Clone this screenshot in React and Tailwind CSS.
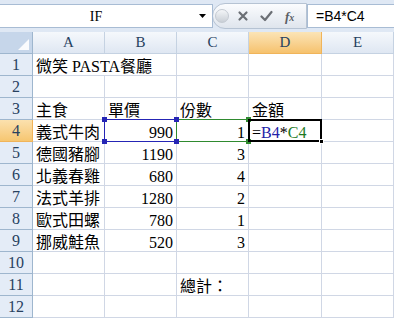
import React from 'react';

const cols = ['A', 'B', 'C', 'D', 'E'];

const rows = [
  ['微笑 PASTA餐廳', '', '', '', ''],
  ['', '', '', '', ''],
  ['主食', '單價', '份數', '金額', ''],
  ['義式牛肉', 990, 1, 'F', ''],
  ['德國豬腳', 1190, 3, '', ''],
  ['北義春雞', 680, 4, '', ''],
  ['法式羊排', 1280, 2, '', ''],
  ['歐式田螺', 780, 1, '', ''],
  ['挪威鮭魚', 520, 3, '', ''],
  ['', '', '', '', ''],
  ['', '', '總計：', '', ''],
  ['', '', '', '', ''],
];

const font = { fontFamily: '"Liberation Serif", "Noto Sans CJK TC", serif' };

const Handle = ({ pos, color }) => (
  <div className={`absolute w-[5px] h-[5px] z-20 ${color} ${pos}`} />
);

function Cell({ value, r, c }) {
  const isNum = typeof value === 'number';
  const overflow = r === 0 && c === 0;
  return (
    <div
      className={`relative h-[22px] border-b border-[#d0d7e5] flex items-end px-[3px] whitespace-nowrap text-[16px] leading-[17px] text-black ${
        overflow ? '' : 'border-r'
      } ${isNum ? 'justify-end' : 'justify-start'}`}
    >
      {value === 'F' ? (
        <span className="relative z-30">
          =<span className="text-[#2222a8]">B4</span>*<span className="text-[#1e7a1e]">C4</span>
        </span>
      ) : (
        <span className="relative z-10">{value}</span>
      )}
      {r === 3 && c === 1 && (
        <>
          <div className="absolute left-[-1px] top-[-1px] right-[-1px] bottom-[-1px] border border-[#2525b5] z-10" />
          <Handle color="bg-[#2525b5]" pos="left-[-3px] top-[-3px]" />
          <Handle color="bg-[#2525b5]" pos="right-[-3px] top-[-3px]" />
          <Handle color="bg-[#2525b5]" pos="left-[-3px] bottom-[-3px]" />
          <Handle color="bg-[#2525b5]" pos="right-[-3px] bottom-[-3px]" />
        </>
      )}
      {r === 3 && c === 2 && (
        <>
          <div className="absolute left-[-1px] top-[-1px] right-[-1px] bottom-[-1px] border border-[#2f8a2f] z-10" />
          <Handle color="bg-[#2f8a2f]" pos="right-[-3px] top-[-3px]" />
          <Handle color="bg-[#2f8a2f]" pos="right-[-3px] bottom-[-3px]" />
        </>
      )}
      {r === 3 && c === 3 && (
        <>
          <div className="absolute left-[-1px] top-[-1px] right-[-1px] bottom-[-1px] border-2 border-black z-20" />
          <div className="absolute right-[-3px] bottom-[-3px] w-[5px] h-[5px] bg-black border border-white z-30" />
        </>
      )}
    </div>
  );
}

export default function App() {
  return (
    <div className="w-[394px] h-[318px] overflow-hidden bg-white" style={font}>
      {/* formula bar */}
      <div className="h-[32px] bg-[#dfe8f4] flex items-center relative">
        <div className="h-[24px] w-[213px] bg-white border border-[#a8bcd4] border-l-0 flex items-center relative">
          <span
            className="flex-1 text-center text-[14px] text-black pr-[20px]"
            style={{ fontFamily: '"Liberation Serif", serif' }}
          >
            IF
          </span>
          <svg className="absolute right-[6px] top-[9px]" width="7" height="4" viewBox="0 0 7 4">
            <path d="M0 0h7L3.5 4z" fill="#000" />
          </svg>
        </div>
        <div className="h-[26px] w-[95px] -ml-[1px] rounded-l-full bg-gradient-to-b from-[#fbfcfe] to-[#dfe5ed] border border-[#b6c3d3] flex items-center pl-[2px]">
          <div className="w-[14px] h-[14px] rounded-full bg-gradient-to-b from-[#f4f6f8] to-[#c9cfd6] border border-[#c4cad2]" />
          <svg width="12" height="12" viewBox="0 0 12 12" className="ml-[8px]">
            <path d="M2.5 2.5l7 7M9.5 2.5l-7 7" stroke="#6b6f75" strokeWidth="2.2" strokeLinecap="round" />
          </svg>
          <svg width="13" height="12" viewBox="0 0 13 12" className="ml-[11px]">
            <path d="M1.5 6.5l3.5 3.5 6.5-8" stroke="#6b6f75" strokeWidth="2.2" fill="none" strokeLinecap="round" strokeLinejoin="round" />
          </svg>
          <span className="ml-[12px] text-[13px] italic text-[#5a5e64] font-bold leading-none">
            f<span className="text-[10px]">x</span>
          </span>
        </div>
        <div
          className="h-[24px] flex-1 bg-white border border-[#a8bcd4] border-r-0 flex items-center pl-[8px] text-[14px] text-black"
          style={{ fontFamily: '"Liberation Sans", Arial, sans-serif' }}
        >
          =B4*C4
        </div>
      </div>

      {/* sheet */}
      <div className="grid grid-cols-[33px_72px_72px_72px_73px_72px]">
        <div className="h-[22px] bg-[#c6d6ea] border-r border-b border-[#9eb6ce] relative">
          <svg className="absolute right-[3px] bottom-[3px]" width="11" height="11" viewBox="0 0 11 11">
            <path d="M11 0V11H0z" fill="#ffffff" opacity="0.9" />
          </svg>
        </div>
        {cols.map((c) => (
          <div
            key={c}
            className={`h-[22px] border-r border-b flex items-center justify-center text-[15px] text-[#27415f] ${
              c === 'D'
                ? 'bg-gradient-to-b from-[#fbe4b6] to-[#f6c26d] border-[#f0b45a]'
                : 'bg-gradient-to-b from-[#f5f8fc] to-[#dfe7f2] border-[#c5d2e2]'
            }`}
          >
            {c}
          </div>
        ))}
        {rows.map((row, r) => (
          <React.Fragment key={r}>
            <div
              className={`h-[22px] border-r border-b flex items-center justify-center text-[16px] text-[#27415f] ${
                r === 3
                  ? 'bg-gradient-to-b from-[#fbe1ae] to-[#f6c670] border-[#f0b45a]'
                  : 'bg-[#e4ecf7] border-[#9eb6ce]'
              }`}
            >
              {r + 1}
            </div>
            {row.map((v, c) => (
              <Cell key={c} value={v} r={r} c={c} />
            ))}
          </React.Fragment>
        ))}
      </div>
    </div>
  );
}
